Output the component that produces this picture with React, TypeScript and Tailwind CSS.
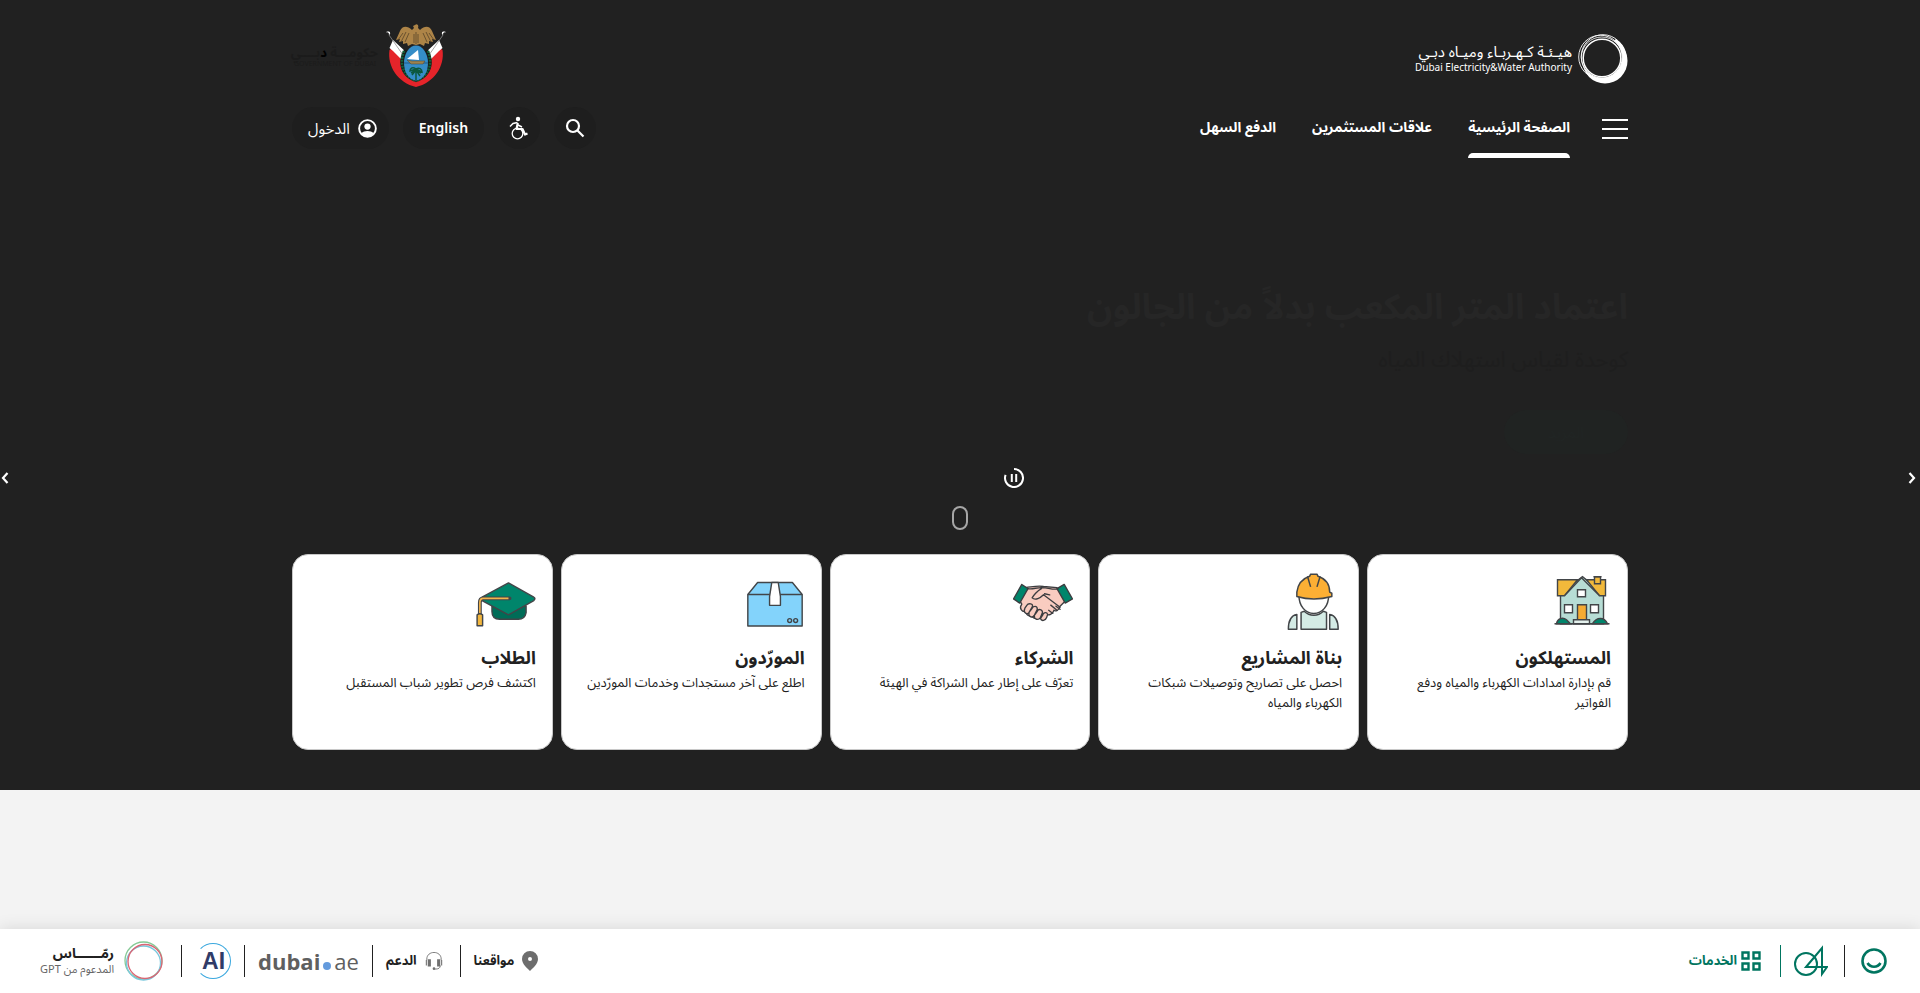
import type { ReactNode } from 'react';

function DewaMark() {
  return (
    <svg viewBox="0 0 50 50" className="size-[50px]" fill="none" stroke="#fff" aria-hidden="true">
      <circle cx="27" cy="27" r="22.500" fill="#fff" stroke="none" />
      <circle cx="23.800" cy="23.500" r="20.500" fill="#212121" strokeWidth="0.800" />
      <circle cx="24" cy="24" r="18.800" strokeWidth="1.500" />
      <circle cx="22.500" cy="23" r="21.800" strokeWidth="0.900" />
      <circle cx="25" cy="22.500" r="21.800" strokeWidth="0.900" />
      <path d="M37 6c10 6 13 17 9 29" strokeWidth="2.500" />
    </svg>
  );
}

function DubaiEmblem() {
  return (
    <svg viewBox="0 0 60 64" className="h-16 w-[60px]" aria-hidden="true">
      <path d="M3.500 26C1 42 12 59 30 63 48 59 59 42 56.500 26L51 22 44 30H16L9 22Z" fill="#e5242a" />
      <path d="M3.500 24 7 16l14 13-5 7-9-9Z M56.500 24 53 16 39 29l5 7 9-9Z" fill="#fff" />
      <path d="M0 8l4 1-1 2 14 20M60 8l-4 1 1 2-14 20" stroke="#8c8c8c" strokeWidth="0.800" fill="none" />
      <path d="M1 7l3 1v3zM59 7l-3 1v3z" fill="#fff" />
      <path d="M18 26C10 38 15 54 30 58 45 54 50 38 42 26Z" fill="#181b18" />
      <path d="M18 27c-5 13-1 25 12 30M42 27c5 13 1 25-12 30" fill="none" stroke="#12613b" strokeWidth="2.500" strokeDasharray="2 1" />
      <ellipse cx="30" cy="39" rx="12" ry="17.500" fill="#358dc7" />
      <path d="M18 39h24" stroke="#225b87" />
      <path d="M21 35l11-9 1 10z" fill="#fff" />
      <path d="M21 36l5 1h13l-2 3H25z" fill="#9b8350" stroke="#4a4330" strokeWidth="0.500" />
      <path d="M30 44v12M30 45c-4-3-6 0-6 2l6-2 6 3c0-3-3-5-6-3M30 46l-4 5m4-5 4 6m-4-6-5 3m5-3 5 3" stroke="#0c583d" strokeWidth="1.500" fill="none" />
      <path d="M29 1c2-2 4 0 3 3l2 2c5-5 10-4 12 1l4 9-4-1 1 3-4-1v3l-4-1-1 3-4-2-4 1-4-1-4 2-1-3-4 1v-3l-4 1 1-3-4 1 4-9c2-5 7-6 12-1l2-2-1-2z" fill="#ad8447" />
      <path d="M17 9l-5 7M20 8l-5 10M23 9l-4 9M43 9l5 7M40 8l5 10M37 9l4 9M28 10v9M32 10v9M30 8v12" stroke="#4c3b24" strokeWidth="0.700" fill="none" />
    </svg>
  );
}

const iconClass = 'size-[60px]';

function HouseIcon() {
  return (
    <svg viewBox="-0.5 1.3 60 60" className={iconClass} stroke="#424548" strokeWidth="1.400" aria-hidden="true">
      <path d="M9 24v30h43V24L31 7Z" fill="#b7ddd5" />
      <path d="M6 10h20L13 26H6ZM35 10h19v16h-6Z" fill="#f2b93b" />
      <path d="M13 26 30 8l18 18" fill="#b7ddd5" />
      <path d="M43 7h6v7h-6z" fill="#f2b93b" />
      <path d="M42 7h8" />
      <path d="M26 20h8v7h-8zM13 35h8v8h-8zM39 35h8v8h-8z" fill="#fff" />
      <path d="M26 35h9v16h-9z" fill="#f5ab32" />
      <path d="M22 50h16v4H22z" fill="#e4f1ed" />
      <path d="M5 54c1-5 6-7 10-4l4 4ZM41 54c4-7 12-7 15 0Z" fill="#00856b" />
      <path d="M3 54h55" />
    </svg>
  );
}

function BuilderIcon() {
  return (
    <svg viewBox="2 0 56.600 56.600" className={iconClass} stroke="#424548" strokeWidth="1.400" strokeLinejoin="round" aria-hidden="true">
      <path d="M18 23c0 10 6 17 14 17s14-7 14-17" fill="#fff" />
      <path d="M16 20C17 12 22 7 28 5l1-2h6l1 2c6 2 11 7 11 15l2 1v3c-11 3-23 3-33 0v-3Z" fill="#fcaf34" />
      <path d="M26 5l3 10M38 5l-3 10" fill="none" />
      <path d="M16 41v14H8c0-8 2-13 8-14ZM47 41c6 1 8 6 8 14h-8Z" fill="#d4ebe5" />
      <path d="M20 39l3-1c5 5 13 5 18 0l3 1v16H20Z" fill="#d4ebe5" />
    </svg>
  );
}

function HandshakeIcon() {
  return (
    <svg viewBox="1.500 0 58 58" className={iconClass} stroke="#3c3d40" strokeWidth="1.300" strokeLinejoin="round" strokeLinecap="round" aria-hidden="true">
      <path d="M14 16c8-1 12-2 17-1l13 1 9 12-6 6c-1 5-5 5-6 4-1 4-5 5-7 4-2 4-6 4-8 3-3 2-6 0-6-2-4 1-6-1-6-4-4 1-7-3-4-7l-4-7Z" fill="#f9ccc0" />
      <path d="m2 27 8-14 6 4-8 14ZM44 17l7-4 8 14-7 4Z" fill="#00856b" />
      <path d="M16 17c4 1 8-1 13-1 8 0 11 3 16 1M29 17c-4 2-8 7-9 9 3 3 8 0 11-3l16 12M32 22l5 1" fill="none" />
      <path d="M13 36c-2 4 2 7 4 4l3-5c2-4-4-4-5-2Zm4 4c-1 4 3 6 5 3l3-6c0-4-4-3-5-1Zm5 3c0 4 4 5 6 2l2-5c0-3-4-4-5-1Zm6 3c1 3 5 2 6-1l1-3c-1-3-4-2-5 1Z" fill="#f9ccc0" />
      <path d="m36 38 4 3M38 33l6 5M43 34l4 3" fill="none" />
    </svg>
  );
}

function BoxIcon() {
  return (
    <svg viewBox="2.400 1.400 55.200 55.200" className={iconClass} stroke="#424548" strokeWidth="1.300" strokeLinejoin="round" aria-hidden="true">
      <path d="M5 23 14 12h32l9 11v29H5Z" fill="#83d3fb" />
      <path d="M5 23h50" />
      <path d="M27 12h6l2 13v8h-10v-8Z" fill="#fff" />
      <circle cx="43.500" cy="47" r="1.800" fill="none" />
      <circle cx="49" cy="47" r="1.800" fill="none" />
    </svg>
  );
}

function CapIcon() {
  return (
    <svg viewBox="5.500 2.200 54.500 54.500" className={iconClass} stroke="#424548" strokeWidth="1.300" strokeLinejoin="round" aria-hidden="true">
      <path d="M20 34h31v6q-1 6-7 6H27q-7 0-7-7Z" fill="#006c57" />
      <path d="m35 13 23 13q2 1 0 3L35 42 11 29q-2-1 0-3Z" fill="#00856b" />
      <path d="M36 27H12q-3 0-3 4v12" fill="none" strokeWidth="3.500" strokeLinecap="round" />
      <path d="M35 27H12q-3 0-3 4v12" fill="none" stroke="#f2b44b" strokeWidth="1.500" />
      <path d="M6.500 42q2.500-2 5 0v10h-5Z" fill="#f2b63e" />
    </svg>
  );
}

type Card = { title: string; text: string; icon: ReactNode };

const cards: Card[] = [
  { title: 'المستهلكون', text: 'قم بإدارة امدادات الكهرباء والمياه ودفع الفواتير', icon: <HouseIcon /> },
  { title: 'بناة المشاريع', text: 'احصل على تصاريح وتوصيلات شبكات الكهرباء والمياه', icon: <BuilderIcon /> },
  { title: 'الشركاء', text: 'تعرّف على إطار عمل الشراكة في الهيئة', icon: <HandshakeIcon /> },
  { title: 'المورّدون', text: 'اطلع على آخر مستجدات وخدمات المورّدين', icon: <BoxIcon /> },
  { title: 'الطلاب', text: 'اكتشف فرص تطوير شباب المستقبل', icon: <CapIcon /> },
];

function Header() {
  return (
    <header className="mx-auto w-full max-w-[1336px]">
      <div className="flex items-center justify-between pt-6">
        <a href="#home" className="flex items-center gap-[6px] pt-[6px]">
          <DewaMark />
          <span className="flex flex-col text-right">
            <span className="text-[15px] leading-4">هيـئـة كـهـربـاء وميـاه دبـي</span>
            <span dir="ltr" className="text-[10px] leading-4">Dubai Electricity&amp;Water Authority</span>
          </span>
        </a>
        <a href="#government" className="flex items-center gap-2">
          <DubaiEmblem />
          <span className="flex w-[86px] flex-col text-center whitespace-nowrap text-[#1b1b1b]">
            <span className="text-[13px] leading-4 font-bold">حكومـــة <span className="text-black">د</span>بــــي</span>
            <span dir="ltr" className="text-[7px] leading-2">GOVERNMENT OF DUBAI</span>
          </span>
        </a>
      </div>
      <div className="flex items-start justify-between pt-4">
        <div className="flex items-start gap-8">
          <button type="button" aria-label="القائمة" className="mt-[15px] flex w-[26px] flex-col gap-[7px]">
            <span className="h-[2px] w-full bg-white" />
            <span className="h-[2px] w-full bg-white" />
            <span className="h-[2px] w-full bg-white" />
          </button>
          <nav className="flex gap-9 text-sm leading-6 font-bold">
            <a href="#home" className="flex h-[54px] flex-col justify-between pt-[11px]">
              الصفحة الرئيسية
              <span className="h-[5px] rounded-t-full bg-white" />
            </a>
            <a href="#investors" className="pt-[11px]">علاقات المستثمرين</a>
            <a href="#easypay" className="pt-[11px]">الدفع السهل</a>
          </nav>
        </div>
        <div className="flex items-center gap-[14px] pt-[3px]">
          <button type="button" aria-label="بحث" className="flex size-[42px] items-center justify-center rounded-full bg-[#1e1e1e]">
            <svg viewBox="0 0 20 20" className="size-5" fill="none" stroke="#fff" strokeWidth="2.200" aria-hidden="true">
              <circle cx="8" cy="8" r="6" />
              <path d="m12.500 12.500 6 6" />
            </svg>
          </button>
          <button type="button" aria-label="إمكانية الوصول" className="flex size-[42px] items-center justify-center rounded-full bg-[#1e1e1e]">
            <svg viewBox="0 0 20 24" className="h-6 w-5" fill="none" stroke="#fff" aria-hidden="true">
              <circle cx="9" cy="3" r="2.200" fill="#fff" stroke="none" />
              <path d="M8.800 7 7.500 13h6l2.500 5.500 2.500-1" strokeWidth="2.200" strokeLinejoin="round" />
              <path d="M8.500 6.500 4 7.500l-3 3M9 9l4 2" strokeWidth="1.500" />
              <circle cx="8.500" cy="17.500" r="5.300" strokeWidth="1.300" />
            </svg>
          </button>
          <a href="#english" className="flex h-[42px] items-center rounded-full bg-[#1e1e1e] px-4 text-sm font-semibold">English</a>
          <a href="#login" className="flex h-[42px] items-center gap-2 rounded-full bg-[#1e1e1e] pr-3 pl-4 text-[15px]">
            <svg viewBox="0 0 20 20" className="size-[19px]" fill="#fff" aria-hidden="true">
              <circle cx="10" cy="10" r="8.800" fill="none" stroke="#fff" strokeWidth="2" />
              <circle cx="10" cy="8" r="3.300" />
              <path d="M3.500 15c3-3 10-3 13 0-3 5-10 5-13 0Z" />
            </svg>
            الدخول
          </a>
        </div>
      </div>
    </header>
  );
}

function Hero() {
  return (
    <section className="flex flex-col bg-[#212121] pb-10 text-white">
      <Header />
      <div className="mx-auto flex w-full max-w-[1336px] flex-col items-start pt-[122px]">
        <h1 className="text-[35px] leading-[52px] font-bold text-[#262626]">اعتماد المتر المكعب بدلاً من الجالون</h1>
        <p className="mt-[10px] text-[22px] leading-8 text-[#1e1e1e]">كوحدة لقياس استهلاك المياه</p>
        <a href="#more" className="mt-9 flex h-11 w-[124px] items-center justify-center rounded-full bg-[#202322] text-base text-[#212524]">المزيد</a>
      </div>
      <div className="mt-[14px] flex items-center justify-between">
        <button type="button" aria-label="السابق" className="flex w-4 justify-center">
          <svg viewBox="0 0 8 12" className="h-3 w-2" fill="none" stroke="#fff" strokeWidth="2.200" aria-hidden="true"><path d="m1.500 1 4.500 5-4.500 5" /></svg>
        </button>
        <div className="flex w-32">
          <button type="button" aria-label="إيقاف مؤقت">
            <svg viewBox="0 0 20 20" className="size-5" fill="none" stroke="#fff" strokeWidth="2" aria-hidden="true">
              <path d="M10 1a9 9 0 1 1-8.400 5.800" />
              <path d="M7.800 6v8M12.200 6v8" />
            </svg>
          </button>
        </div>
        <button type="button" aria-label="التالي" className="flex w-4 justify-end pl-px">
          <svg viewBox="0 0 8 12" className="h-3 w-2" fill="none" stroke="#fff" strokeWidth="2.200" aria-hidden="true"><path d="M6.500 1 2 6l4.500 5" /></svg>
        </button>
      </div>
      <span className="mx-auto mt-[18px] h-6 w-4 rounded-full border-2 border-[#a6a6a6]" />
      <div className="mx-auto mt-6 grid w-full max-w-[1336px] grid-cols-5 gap-2">
        {cards.map((card) => (
          <a key={card.title} href="#services" className="flex h-[196px] flex-col rounded-[16px] border border-[#c8c8c8] bg-white px-4 pt-4 text-[#212121]">
            {card.icon}
            <h2 className="mt-3 text-lg leading-[29px] font-bold">{card.title}</h2>
            <p className="text-[13px] leading-5">{card.text}</p>
          </a>
        ))}
      </div>
    </section>
  );
}

function Footer() {
  return (
    <footer className="sticky bottom-0 mt-auto flex h-16 items-center justify-between bg-white pr-[33px] pl-10 text-[#212121] shadow-[0_0_16px_rgba(0,0,0,0.12)]">
      <div className="flex items-center gap-4 text-[#007560]">
        <button type="button" aria-label="السعادة">
          <svg viewBox="0 0 26 26" className="size-[26px]" fill="none" stroke="#007560" strokeWidth="2.600" aria-hidden="true">
            <circle cx="13" cy="13" r="11.500" />
            <path d="M6.500 15c3 5 10 5 13 0" />
          </svg>
        </button>
        <span className="h-8 w-px bg-[#212121]" />
        <a href="#04" aria-label="04">
          <svg viewBox="0 0 34 32" className="h-8 w-[34px]" fill="none" stroke="#007560" strokeWidth="2" aria-hidden="true">
            <circle cx="12" cy="19" r="11" />
            <path d="M12 22 28 3v26l5-7Z" />
          </svg>
        </a>
        <span className="-mr-[3px] h-8 w-px bg-[#007560]" />
        <a href="#services" className="mr-[3px] flex items-center gap-1 text-[13px] font-bold">
          <svg viewBox="0 0 20 20" className="size-5" fill="none" stroke="#007560" strokeWidth="2.400" aria-hidden="true">
            <path d="M1.500 1.500h6v6h-6zM12.500 1.500h6v6h-6zM1.500 12.500h6v6h-6zM12.500 12.500h6v6h-6z" />
          </svg>
          الخدمات
        </a>
      </div>
      <div className="flex items-center gap-[13px] text-[13px] font-bold">
        <a href="#locations" className="flex items-center gap-2">
          <svg viewBox="0 0 16 20" className="h-5 w-4" fill="#6d6d6d" aria-hidden="true">
            <path fillRule="evenodd" d="M8 0a8 8 0 0 1 8 8c0 5-5 9-8 12-3-3-8-7-8-12a8 8 0 0 1 8-8Zm0 6a2 2 0 1 0 0 4 2 2 0 0 0 0-4Z" />
          </svg>
          مواقعنا
        </a>
        <span className="h-8 w-px bg-[#212121]" />
        <a href="#support" className="mr-1 flex items-center gap-2">
          <svg viewBox="0 0 20 20" className="size-[18px]" fill="none" stroke="#707070" aria-hidden="true">
            <path d="M2 9V8C2-2 18-2 18 8v1" />
            <path d="M1.500 9v6M18.500 9v6" strokeWidth="1.200" />
            <path d="M4.800 8v8M15.200 8v8" strokeWidth="3.500" />
            <path d="M17 15c0 3-2 4-6 4" />
            <circle cx="10" cy="18.500" r="1.500" fill="#707070" stroke="none" />
          </svg>
          الدعم
        </a>
        <span className="h-8 w-px bg-[#212121]" />
        <a href="#dubai" dir="ltr" className="flex items-baseline font-['Open_Sans',sans-serif] text-[22px] leading-8 text-[#5f5f5f]">
          dubai
          <span className="mx-[3px] size-2 rounded-full bg-[#649bdd]" />
          <span className="font-normal">ae</span>
        </a>
        <span className="h-8 w-px bg-[#212121]" />
        <a href="#ai" className="flex size-9 items-center justify-center rounded-full border border-[#39a7de] border-l-transparent pl-px font-['Liberation_Sans',sans-serif] text-[23px] text-[#303b68]">AI</a>
        <span className="h-8 w-px bg-[#212121]" />
        <a href="#rammas" className="mr-1 flex items-center gap-[10px]">
          <svg viewBox="0 0 40 40" className="size-10" fill="none" strokeWidth="1.300" aria-hidden="true">
            <circle cx="19.500" cy="19.500" r="18.500" stroke="#84c995" />
            <circle cx="19.500" cy="22" r="17" stroke="#79c8dd" />
            <circle cx="21" cy="20.500" r="17" stroke="#db6575" />
          </svg>
          <span className="flex flex-col">
            <span className="text-sm leading-4">رمّــــــاس</span>
            <span className="text-[11px] leading-4 font-normal text-[#666]">المدعوم من GPT</span>
          </span>
        </a>
      </div>
    </footer>
  );
}

export default function App() {
  return (
    <main dir="rtl" lang="ar" className="flex min-h-screen flex-col bg-[#f3f3f3] font-['Noto_Sans','Noto_Sans_Arabic',sans-serif]">
      <Hero />
      <Footer />
    </main>
  );
}
